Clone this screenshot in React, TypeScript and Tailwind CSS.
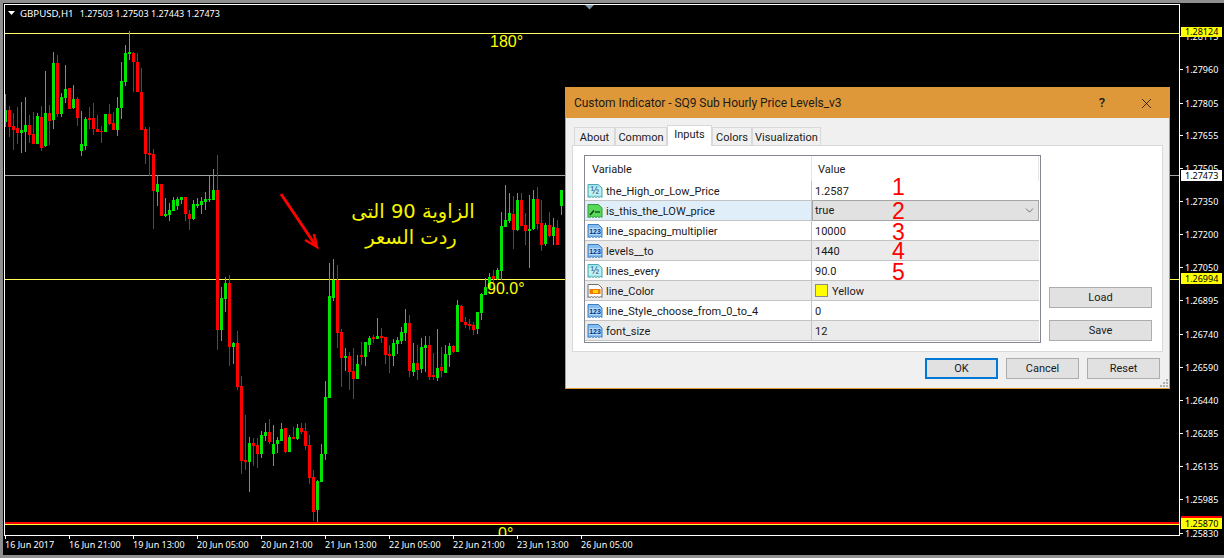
import { ChevronDown, X } from 'lucide-react'

// [wickTop, wickBottom, bodyTop, bodyBottom] in page pixels, one candle every 4px starting at x=5.33
type Candle = [string, number, number, number, number]

const rawA: Candle[] = [
  ['g', 282, 380, 330, 366], ['r', 318, 410, 330, 380], ['r', 340, 452, 378, 390], ['r', 320, 430, 384, 400],
  ['g', 306, 460, 390, 400], ['g', 292, 458, 375, 396], ['r', 345, 430, 375, 405], ['r', 336, 432, 402, 432],
  ['g', 340, 432, 348, 432], ['r', 318, 452, 350, 442], ['g', 212, 440, 340, 440], ['r', 315, 436, 338, 362],
  ['g', 156, 388, 190, 360], ['r', 165, 350, 190, 342], ['g', 280, 352, 292, 342], ['g', 195, 310, 268, 295],
  ['r', 265, 328, 265, 328], ['g', 255, 328, 298, 326], ['r', 290, 378, 298, 354], ['g', 334, 468, 432, 452],
  ['g', 352, 452, 358, 438], ['r', 322, 388, 355, 360], ['r', 310, 405, 354, 388], ['r', 345, 396, 388, 396],
  ['r', 378, 430, 393, 396], ['g', 342, 396, 342, 396], ['r', 312, 375, 342, 372], ['r', 335, 372, 370, 392],
  ['g', 292, 410, 324, 390], ['g', 186, 356, 244, 326], ['g', 136, 258, 160, 246], ['g', 93, 180, 156, 162],
  ['r', 155, 275, 160, 188], ['r', 160, 276, 186, 276], ['r', 205, 390, 276, 390], ['r', 380, 490, 388, 462],
  ['r', 382, 530, 460, 466], ['r', 448, 688, 462, 572], ['g', 526, 620, 552, 575], ['r', 552, 648, 552, 648],
  ['g', 595, 652, 642, 648], ['g', 610, 665, 630, 646], ['g', 590, 632, 600, 632], ['g', 590, 628, 598, 618],
  ['g', 590, 610, 592, 602], ['r', 592, 665, 592, 644], ['r', 630, 690, 642, 656], ['g', 600, 660, 612, 656],
  ['g', 595, 625, 612, 618], ['g', 590, 640, 602, 615], ['g', 575, 630, 597, 606], ['g', 528, 605, 597, 600],
  ['g', 507, 600, 570, 600],
]

const rawB: Candle[] = [
  ['r', -370, 216, -264, 155], ['g', 27, 190, 60, 155], ['g', -4, 100, 15, 62], ['r', -10, 262, 15, 208],
  ['g', 192, 258, 195, 208], ['r', 160, 338, 195, 326], ['r', 295, 588, 324, 548], ['r', 410, 576, 546, 552],
  ['g', 478, 642, 495, 552], ['r', 480, 565, 495, 504], ['r', 480, 570, 502, 530], ['g', 460, 540, 472, 530],
  ['g', 435, 490, 462, 474], ['r', 424, 500, 462, 492], ['g', 442, 564, 498, 528], ['g', 478, 525, 487, 498],
  ['g', 436, 490, 453, 490], ['r', 450, 525, 450, 522], ['g', 472, 522, 478, 522], ['r', 448, 485, 477, 483],
  ['g', 438, 485, 450, 484], ['r', 434, 466, 450, 462], ['r', 435, 516, 460, 504], ['r', 470, 618, 502, 600],
  ['r', 576, 730, 598, 702], ['g', 606, 732, 610, 698], ['g', 498, 610, 528, 612], ['g', 310, 548, 358, 530],
  ['g', -46, 360, 54, 360], ['g', -56, 70, 5, 58], ['r', -40, 208, 5, 165],
]

const rawC: Candle[] = [
  ['r', 448, 622, 456, 533], ['g', 505, 575, 528, 534], ['r', 515, 628, 528, 575], ['r', 505, 658, 574, 598],
  ['g', 525, 598, 553, 598], ['r', 485, 555, 525, 530], ['g', 485, 558, 486, 530], ['g', 468, 515, 474, 495],
  ['r', 465, 490, 470, 476], ['g', 415, 478, 468, 477], ['r', 445, 490, 468, 474], ['r', 470, 552, 472, 525],
  ['r', 495, 578, 521, 527], ['g', 478, 558, 490, 528], ['g', 470, 520, 480, 492], ['g', 440, 490, 456, 482],
  ['g', 388, 485, 430, 460], ['r', 405, 590, 430, 574], ['g', 490, 590, 548, 574], ['r', 495, 600, 548, 568],
  ['g', 475, 580, 501, 568], ['g', 468, 575, 495, 503], ['r', 468, 600, 495, 592], ['r', 520, 600, 586, 592],
  ['g', 448, 605, 564, 594], ['r', 500, 590, 562, 574], ['g', 495, 580, 522, 578], ['g', 488, 560, 498, 525],
  ['r', 495, 518, 498, 515], ['g', 360, 516, 376, 516], ['r', 375, 425, 378, 425], ['r', 412, 445, 427, 435],
  ['r', 418, 450, 432, 438], ['r', 425, 463, 434, 450], ['g', 395, 460, 396, 447], ['g', 340, 420, 343, 400],
  ['g', 295, 345, 322, 345], ['g', 280, 322, 290, 322], ['r', 270, 305, 288, 298], ['g', 265, 300, 270, 298],
  ['g', 95, 300, 138, 272], ['g', 15, 142, 120, 142], ['g', 38, 128, 100, 124], ['r', 48, 208, 102, 150],
  ['g', 40, 155, 60, 150], ['r', 38, 138, 60, 138], ['r', 100, 195, 135, 153], ['g', 45, 265, 148, 153],
  ['g', 30, 150, 57, 148], ['r', 22, 150, 57, 132], ['r', 60, 212, 130, 195], ['g', 130, 200, 135, 192],
  ['r', 96, 170, 135, 168], ['g', 115, 195, 140, 168], ['r', 120, 195, 144, 195], ['g', 30, 105, 30, 78],
]

const candles = [
  ...rawA.map(([c, a, b, d, e]) => [c, a / 3, b / 3, d / 3, e / 3] as Candle),
  ...rawB.map(([c, a, b, d, e]) => [c, 278 + a / 3, 278 + b / 3, 278 + d / 3, 278 + e / 3] as Candle),
  ...rawC.map(([c, a, b, d, e]) => [c, 180 + a / 3, 180 + b / 3, 180 + d / 3, 180 + e / 3] as Candle),
]

const ticks: [string, number][] = [
  ['1.28115', 36], ['1.27960', 69], ['1.27805', 103], ['1.27655', 135], ['1.27505', 168], ['1.27350', 201],
  ['1.27200', 234], ['1.27050', 267], ['1.26895', 300], ['1.26740', 334], ['1.26590', 367], ['1.26440', 400],
  ['1.26285', 433], ['1.26135', 466], ['1.25985', 499], ['1.25830', 533],
]

const dates = [
  '16 Jun 2017', '16 Jun 21:00', '19 Jun 13:00', '20 Jun 05:00', '20 Jun 21:00',
  '21 Jun 13:00', '22 Jun 05:00', '22 Jun 21:00', '23 Jun 13:00', '26 Jun 05:00',
]

type Kind = 'half' | 'int' | 'bool' | 'color'

const rows: { name: string; value: string; kind: Kind }[] = [
  { name: 'the_High_or_Low_Price', value: '1.2587', kind: 'half' },
  { name: 'is_this_the_LOW_price', value: 'true', kind: 'bool' },
  { name: 'line_spacing_multiplier', value: '10000', kind: 'int' },
  { name: 'levels__to', value: '1440', kind: 'int' },
  { name: 'lines_every', value: '90.0', kind: 'half' },
  { name: 'line_Color', value: 'Yellow', kind: 'color' },
  { name: 'line_Style_choose_from_0_to_4', value: '0', kind: 'int' },
  { name: 'font_size', value: '12', kind: 'int' },
]

function ParamIcon({ kind }: { kind: Kind }) {
  const shell = 'M1 1.5h10.5l3.5 3.5v9.5l-1.5-1-1.5 1-1.5-1-1.5 1-1.5-1-1.5 1-1.5-1-1.5 1-1.5-1L1 14.5z'
  if (kind === 'color') {
    return (
      <svg width="16" height="16" viewBox="0 0 16 16" className="shrink-0">
        <path d={shell} fill="#fafafa" stroke="#6f6f6f" />
        <rect x="2.5" y="6" width="11" height="5" fill="#f07800" />
        <rect x="6" y="7" width="5" height="3" fill="#ffd800" />
      </svg>
    )
  }
  if (kind === 'bool') {
    return (
      <svg width="16" height="16" viewBox="0 0 16 16" className="shrink-0">
        <path d={shell} fill="#58d858" stroke="#2f9a3f" />
        <path d="M3 12l4-4.5" fill="none" stroke="#0b3a12" strokeWidth="1.4" />
        <path d="M8 9h5" fill="none" stroke="#0b3a12" strokeWidth="1.2" />
      </svg>
    )
  }
  const half = kind === 'half'
  return (
    <svg width="16" height="16" viewBox="0 0 16 16" className="shrink-0">
      <path d={shell} fill={half ? '#a6e6ea' : '#86bdf0'} stroke={half ? '#4aa9b5' : '#3f7fbf'} />
      <rect x="2" y="5" width="12" height="7" fill={half ? '#c4f0f2' : '#b5d8f6'} />
      <text x="8" y="11" textAnchor="middle" fontSize={half ? 10 : 7} fontWeight={half ? 400 : 700} fill={half ? '#14507a' : '#0b2f78'} fontFamily="'Liberation Sans', sans-serif">
        {half ? '½' : '123'}
      </text>
    </svg>
  )
}

function Tab({ label, w, active }: { label: string; w: string; active?: boolean }) {
  if (active) {
    return (
      <div className={`${w} relative z-10 -mb-px flex h-[21px] items-start justify-center border border-b-0 border-[#d9d9d9] bg-white pt-[1px]`}>
        {label}
      </div>
    )
  }
  return (
    <div className={`${w} flex h-[18px] items-center justify-center border border-b-0 border-[#d9d9d9] bg-[#f0f0f0] pt-[3px]`}>
      {label}
    </div>
  )
}

function PushButton({ label, w, primary }: { label: string; w: string; primary?: boolean }) {
  return (
    <div className={`${w} flex h-[21px] items-center justify-center bg-[#e1e1e1] pt-[2px] ${primary ? 'border-2 border-[#0078d7]' : 'border border-[#adadad]'}`}>
      {label}
    </div>
  )
}

function ParamsGrid() {
  return (
    <div className="flex h-[188px] w-[457px] flex-col border border-[#828790] bg-white">
      <div className="flex h-[25px] items-center">
        <div className="flex h-full w-[227px] items-center border-r border-[#e5e5e5] pl-[7px] pt-[4px]">Variable</div>
        <div className="flex h-full flex-1 items-center border-r border-[#e5e5e5] pl-[6px] pt-[4px]">Value</div>
        <div className="w-[1px]" />
      </div>
      {rows.map((row, i) => {
        const selected = row.kind === 'bool'
        const striped = i % 2 === 1 && !selected
        return (
          <div key={row.name} className={`mr-px flex h-[20px] items-center border-b border-[#c4c4c4] ${striped ? 'bg-[#ebebeb]' : 'bg-white'}`}>
            <div className={`flex h-full w-[227px] items-center gap-[3px] border-r border-[#c4c4c4] pl-[2px] ${selected ? 'bg-[#e0eefa]' : ''}`}>
              <ParamIcon kind={row.kind} />
              <span className="pt-[3px]">{row.name}</span>
            </div>
            {selected ? (
              <div className="-mt-px flex h-[21px] flex-1 items-center justify-between border border-[#a6a6a6] bg-[#e1e1e1] pl-[2px] pr-[2px]">
                <span className="pt-[3px]">{row.value}</span>
                <ChevronDown size={13} strokeWidth={1.2} color="#333333" />
              </div>
            ) : (
              <div className="flex h-full flex-1 items-center gap-[4px] pl-[3px]">
                {row.kind === 'color' && <span className="h-[13px] w-[13px] border border-[#8a8a8a] bg-[#ffff00]" />}
                <span className="pt-[3px]">{row.value}</span>
              </div>
            )}
          </div>
        )
      })}
    </div>
  )
}

function Dialog() {
  return (
    <div className="absolute left-[562px] top-[84px] flex h-[302px] w-[605px] flex-col border border-[#de9737] font-[Roboto,sans-serif] text-[11px] text-[#1a1a1a]">
      <div className="flex h-[30px] items-center justify-between bg-[#de9839] pl-[8px] pr-[14px] text-[12px]">
        <span className="tracking-[-0.04px]">Custom Indicator - SQ9 Sub Hourly Price Levels_v3</span>
        <div className="flex items-center gap-[33px]">
          <span className="text-[13px] font-medium">?</span>
          <X size={17} strokeWidth={1} color="#000000" />
        </div>
      </div>
      <div className="flex flex-1 flex-col bg-[#f0f0f0] px-[6px] pt-[7px]">
        <div className="flex h-[20px] items-end pl-[2px]">
          <Tab label="About" w="w-[41px]" />
          <Tab label="Common" w="w-[52px]" />
          <Tab label="Inputs" w="w-[45px]" active />
          <Tab label="Colors" w="w-[40px]" />
          <Tab label="Visualization" w="w-[69px]" />
        </div>
        <div className="flex h-[207px] gap-[8px] border border-[#d9d9d9] bg-white pl-[11px] pt-[9px]">
          <ParamsGrid />
          <div className="flex h-[186px] flex-col justify-end gap-[12px]">
            <PushButton label="Load" w="w-[103px]" />
            <PushButton label="Save" w="w-[103px]" />
          </div>
        </div>
        <div className="mt-[6px] flex justify-end gap-[8px] pr-[3px]">
          <PushButton label="OK" w="w-[73px]" primary />
          <PushButton label="Cancel" w="w-[73px]" />
          <PushButton label="Reset" w="w-[73px]" />
        </div>
      </div>
      <svg width="10" height="10" viewBox="0 0 10 10" className="absolute bottom-0 right-0">
        <g fill="#b0b0b0">
          <rect x="7" y="1" width="2" height="2" />
          <rect x="4" y="4" width="2" height="2" />
          <rect x="7" y="4" width="2" height="2" />
          <rect x="1" y="7" width="2" height="2" />
          <rect x="4" y="7" width="2" height="2" />
          <rect x="7" y="7" width="2" height="2" />
        </g>
      </svg>
      <div className="absolute left-[326px] top-[88px] font-['Liberation_Sans',sans-serif] text-[23px] leading-none text-[#ff0000]">1</div>
      <div className="absolute left-[326px] top-[112px] font-['Liberation_Sans',sans-serif] text-[23px] leading-none text-[#ff0000]">2</div>
      <div className="absolute left-[326px] top-[133px] font-['Liberation_Sans',sans-serif] text-[23px] leading-none text-[#ff0000]">3</div>
      <div className="absolute left-[326px] top-[152px] font-['Liberation_Sans',sans-serif] text-[23px] leading-none text-[#ff0000]">4</div>
      <div className="absolute left-[326px] top-[173px] font-['Liberation_Sans',sans-serif] text-[23px] leading-none text-[#ff0000]">5</div>
    </div>
  )
}

function ChartDrawing() {
  return (
    <svg width="1174" height="530" viewBox="5 5 1174 530" className="absolute left-0 top-0" shapeRendering="crispEdges">
      <line x1="5" x2="1180" y1="33.5" y2="33.5" stroke="#ffff66" />
      <line x1="5" x2="1180" y1="175.5" y2="175.5" stroke="#a0a8a8" />
      <line x1="5" x2="1180" y1="279.5" y2="279.5" stroke="#ffff55" />
      <rect x="5" y="522" width="1175" height="2" fill="#ff0000" />
      <line x1="5" x2="1180" y1="524.5" y2="524.5" stroke="#ffff33" />
      {candles.map(([c, wt, wb, bt, bb], i) => {
        const x = 5 + i * 4
        const color = c === 'g' ? '#00e600' : '#ff0000'
        return (
          <g key={i}>
            <rect x={x} y={Math.round(wt)} width="1" height={Math.max(1, Math.round(wb - wt))} fill={color} />
            <rect x={x - 1} y={Math.round(bt)} width="3" height={Math.max(1, Math.round(bb - bt))} fill={color} />
          </g>
        )
      })}
      <polygon points="585,5 594,5 589.5,9.5" fill="#7c93a5" shapeRendering="auto" />
      <polygon points="8,11 15,11 11.5,15" fill="#ffffff" shapeRendering="auto" />
      <g shapeRendering="auto" fill="none" stroke="#ff0000" strokeWidth="3">
        <line x1="281" y1="194" x2="316" y2="246" />
        <polyline points="305,240 317,247 314,234" strokeWidth="2.5" />
      </g>
    </svg>
  )
}

export default function App() {
  return (
    <div className="relative h-[558px] w-[1224px] overflow-hidden border-b-[3px] border-l-[3px] border-t-[3px] border-[#8f8f8f] bg-black pl-[1px] pt-[1px] text-white">
      <div className="flex">
        <div className="relative h-[532px] w-[1176px] overflow-hidden border border-white">
          <ChartDrawing />
          <div className="absolute left-[15px] top-[2px] flex items-baseline gap-[6px] font-['Noto_Sans',sans-serif] text-[9px] leading-[13px]">
            <span className="text-[9.7px]">GBPUSD,H1</span>
            <span>1.27503 1.27503 1.27443 1.27473</span>
          </div>
          <div className="font-['Liberation_Sans',sans-serif] text-[16px] leading-none text-[#ffff00]">
            <span className="absolute left-[485px] top-[29px]">180°</span>
            <span className="absolute left-[482px] top-[276px]">90.0°</span>
            <span className="absolute left-[493px] top-[521px]">0°</span>
          </div>
          <div className="absolute left-[337px] top-[194px] w-[142px] text-center font-['DejaVu_Sans',sans-serif] text-[19.5px] leading-[26px] text-[#f5f500]" dir="rtl">
            <div>الزاوية 90 التى</div>
            <div className="pr-[4px]">ردت السعر</div>
          </div>
        </div>
        <div className="relative h-[532px] w-[44px] font-['Noto_Sans',sans-serif] text-[9px]">
          {ticks.map(([price, y]) => (
            <div key={price} className="absolute left-0 flex items-center gap-[2px] leading-[11px]" style={{ top: y - 9 }}>
              <span className="h-px w-[3px] bg-white" />
              <span>{price}</span>
            </div>
          ))}
          <div className="absolute left-[1px] top-[23px] h-[10px] w-[41px] bg-[#ffff00] pl-[4px] leading-[10px] text-black">1.28124</div>
          <div className="absolute left-[1px] top-[166px] h-[11px] w-[41px] bg-white pl-[4px] leading-[11px] text-black">1.27473</div>
          <div className="absolute left-[1px] top-[269px] h-[11px] w-[41px] bg-[#ffff00] pl-[4px] leading-[11px] text-black">1.26994</div>
          <div className="absolute left-[1px] top-[512px] h-[2px] w-[41px] bg-[#ff0000]" />
          <div className="absolute left-[1px] top-[514px] h-[11px] w-[41px] bg-[#ffff00] pl-[4px] leading-[11px] text-black">1.25870</div>
        </div>
      </div>
      <div className="flex pl-[1px] font-['Noto_Sans',sans-serif] text-[9px]">
        {dates.map(d => (
          <div key={d} className="w-[64px]">
            <div className="h-[3px] w-px bg-white" />
            <div className="-mt-px leading-[13px]">{d}</div>
          </div>
        ))}
      </div>
      <Dialog />
    </div>
  )
}
